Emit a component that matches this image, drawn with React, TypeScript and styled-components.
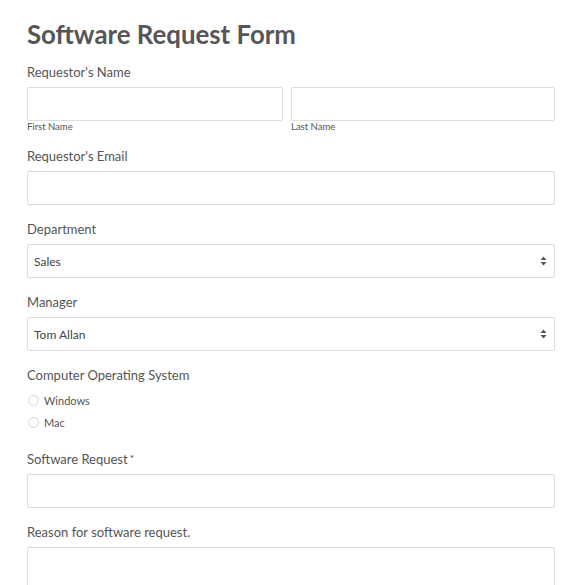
import React from 'react'
import styled, { createGlobalStyle } from 'styled-components'

const GlobalStyle = createGlobalStyle`
  html, body {
    margin: 0;
    padding: 0;
    background: #fff;
  }
  body {
    font-family: Lato, 'Open Sans', 'Liberation Sans', sans-serif;
    color: #555;
  }
  * {
    box-sizing: border-box;
  }
`

const Form = styled.form`
  width: 586px;
  padding: 18px 31px 0 27px;
`
const Title = styled.h1`
  margin: 0 0 14px;
  font-size: 25.8px;
  line-height: 32px;
  font-weight: 700;
  color: #565658;
`
const Field = styled.div`
  margin-bottom: 16px;
`
const Label = styled.label<{ $gap?: number }>`
  display: block;
  font-size: 13px;
  line-height: 16px;
  color: #555;
  margin-bottom: ${p => p.$gap ?? 7}px;
`
const NameRow = styled.div`
  display: grid;
  grid-template-columns: 256px 1fr;
  gap: 8px;
`
const SubLabel = styled.span`
  display: block;
  font-size: 9.5px;
  line-height: 11px;
  color: #555;
`
const TextInput = styled.input`
  display: block;
  width: 100%;
  height: 34px;
  border: 1px solid #dcdcdc;
  border-radius: 2px;
  background: #fff;
  padding: 0 6px;
  font-family: inherit;
  font-size: 12px;
  outline: none;
`
const TextArea = styled.textarea`
  display: block;
  width: 100%;
  height: 80px;
  border: 1px solid #dcdcdc;
  border-radius: 2px;
  background: #fff;
  resize: none;
  outline: none;
`
const SelectBox = styled.div`
  display: flex;
  align-items: center;
  justify-content: space-between;
  height: 34px;
  padding: 0 7px 0 6px;
  border: 1px solid #dcdcdc;
  border-radius: 2px;
  font-size: 12px;
  color: #444;
`
const Arrows = styled.svg`
  width: 7px;
  height: 10px;
`
const RadioList = styled.div`
  display: flex;
  flex-direction: column;
  margin-bottom: 17px;
`
const RadioRow = styled.label`
  display: flex;
  align-items: center;
  gap: 5px;
  height: 22px;
  font-size: 11px;
  color: #555;
`
const RadioDot = styled.span`
  width: 11px;
  height: 11px;
  margin-left: 1px;
  border: 1px solid #d6d6d6;
  border-radius: 50%;
  background: #fff;
`
const Star = styled.span`
  font-size: 10px;
  color: #444;
  vertical-align: 2px;
  margin-left: 2px;
`

function Select ({ value }: { value: string }) {
  return (
    <SelectBox>
      <span>{value}</span>
      <Arrows viewBox='0 0 7 10'>
        <path d='M3.5 0.5 L6.5 4 H0.5 Z' fill='#555' />
        <path d='M3.5 9.5 L6.5 6 H0.5 Z' fill='#555' />
      </Arrows>
    </SelectBox>
  )
}

export default function App () {
  return (
    <>
      <GlobalStyle />
      <Form>
        <Title>Software Request Form</Title>
        <Field>
          <Label>Requestor's Name</Label>
          <NameRow>
            <div>
              <TextInput type='text' />
              <SubLabel>First Name</SubLabel>
            </div>
            <div>
              <TextInput type='text' />
              <SubLabel>Last Name</SubLabel>
            </div>
          </NameRow>
        </Field>
        <Field>
          <Label>Requestor's Email</Label>
          <TextInput type='text' />
        </Field>
        <Field>
          <Label>Department</Label>
          <Select value='Sales' />
        </Field>
        <Field>
          <Label>Manager</Label>
          <Select value='Tom Allan' />
        </Field>
        <Label $gap={6}>Computer Operating System</Label>
        <RadioList>
          <RadioRow><RadioDot />Windows</RadioRow>
          <RadioRow><RadioDot />Mac</RadioRow>
        </RadioList>
        <Field>
          <Label>Software Request<Star>*</Star></Label>
          <TextInput type='text' />
        </Field>
        <Field>
          <Label>Reason for software request.</Label>
          <TextArea />
        </Field>
      </Form>
    </>
  )
}
